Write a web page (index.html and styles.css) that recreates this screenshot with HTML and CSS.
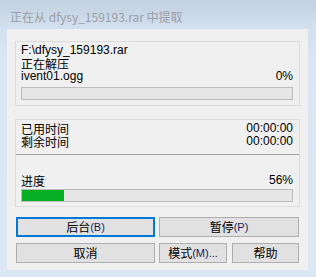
FILE: index.html
```html
<!DOCTYPE html>
<html>
<head>
<meta charset="utf-8">
<link rel="stylesheet" href="styles.css">
</head>
<body>
<div class="window">
  <div class="title">正在从 dfysy_159193.rar 中提取</div>
  <div class="client">
    <div class="group g1">
      <div class="line">F:\dfysy_159193.rar</div>
      <div class="line cn">正在解压</div>
      <div class="line row"><span>ivent01.ogg</span><span>0%</span></div>
      <div class="bar"></div>
    </div>
    <div class="group g2">
      <div class="line row cnrow"><span class="cn">已用时间</span><span>00:00:00</span></div>
      <div class="line row cnrow"><span class="cn">剩余时间</span><span>00:00:00</span></div>
      <div class="sep"></div>
      <div class="line row cnrow prog"><span class="cn">进度</span><span>56%</span></div>
      <div class="bar"><div class="fill" style="width:42px"></div></div>
    </div>
    <div class="buttons">
      <div class="btn focus">后台<span class="lat">(B)</span></div>
      <div class="btn">暂停<span class="lat">(P)</span></div>
      <div class="btn">取消</div>
      <div class="split">
        <div class="btn">模式<span class="lat">(M)...</span></div>
        <div class="btn">帮助</div>
      </div>
    </div>
  </div>
</div>
</body>
</html>
```
FILE: styles.css
```css
html, body {
  margin: 0;
  padding: 0;
}
body {
  width: 316px;
  height: 277px;
  overflow: hidden;
  background: linear-gradient(#c2d0e1 0px, #d3e0ee 29px, #dae6f3 60px, #dce7f4 100%);
  font-family: "Liberation Sans", "Noto Sans CJK SC", sans-serif;
  font-size: 12px;
  color: #000;
}
.window {
  display: flex;
  flex-direction: column;
}
.title {
  height: 29px;
  box-sizing: border-box;
  padding: 9px 0 0 10px;
  font-family: "Noto Sans CJK SC", sans-serif;
  font-size: 12px;
  line-height: 16px;
  color: #9a9ea6;
}
.client {
  margin: 0 8px 0 7px;
  height: 241px;
  background: #f0f0f0;
  box-sizing: border-box;
  padding: 12px 8px 0 8px;
  display: flex;
  flex-direction: column;
}
.group {
  width: 285px;
  box-sizing: border-box;
  border: 1px solid #dcdcdc;
  padding: 2px 6px 0 5px;
}
.g1 { height: 65px; }
.g2 { height: 88px; margin-top: 13px; padding-top: 2px; padding-right: 6px; }
.line {
  height: 13px;
  line-height: 13px;
  white-space: nowrap;
}
.cn, .btn {
  font-family: "Noto Sans CJK SC", sans-serif;
}
.row {
  display: flex;
  justify-content: space-between;
}
.cnrow { height: 13px; }
.bar {
  margin-top: 4px;
  height: 13px;
  box-sizing: border-box;
  border: 1px solid #bcbcbc;
  background: #e6e6e6;
  padding: 0;
}
.fill {
  height: 11px;
  background: #06b025;
}
.sep {
  height: 1px;
  background: #a0a0a0;
  margin: 6px -6px 0 -5px;
}
.prog { margin-top: 19px; height: 14px; }
.g2 .bar { margin-top: 1px; }
.buttons {
  margin-top: 10px;
  display: grid;
  grid-template-columns: 139px 140px;
  column-gap: 4px;
  row-gap: 6px;
  margin-left: 1px;
}
.btn {
  height: 20px;
  box-sizing: border-box;
  border: 1px solid #adadad;
  background: #e1e1e1;
  display: flex;
  align-items: center;
  justify-content: center;
  font-size: 12px;
  line-height: 18px;
}
.btn.focus {
  border: 2px solid #0078d7;
}
.lat {
  font-family: "Liberation Sans", sans-serif;
  font-size: 11px;
  color: #1a1a66;
}
.split {
  display: grid;
  grid-template-columns: 68px 67px;
  column-gap: 5px;
}
```
